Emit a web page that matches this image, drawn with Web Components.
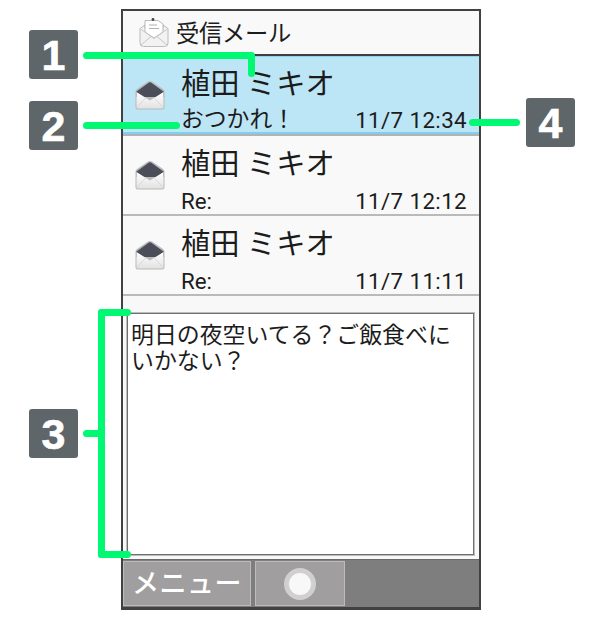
<!DOCTYPE html>
<html lang="ja"><head><meta charset="utf-8"><style>
html,body{margin:0;background:#fff}
body{font-family:Roboto,"Noto Sans CJK JP",sans-serif;color:#1c1c1c}
</style></head><body>
<annotated-stage>
  <phone-frame>
    <mail-header>受信メール</mail-header>
    <mail-row selected name="植田 ミキオ" subject="おつかれ！" time="11/7 12:34"></mail-row>
    <mail-row name="植田 ミキオ" subject="Re:" time="11/7 12:12"></mail-row>
    <mail-row name="植田 ミキオ" subject="Re:" time="11/7 11:11"></mail-row>
    <mail-body>明日の夜空いてる？ご飯食べにいかない？</mail-body>
    <soft-keys></soft-keys>
  </phone-frame>
</annotated-stage>
<script>
const def=(n,html)=>customElements.define(n,class extends HTMLElement{
  connectedCallback(){ if(this.shadowRoot) return; const r=this.attachShadow({mode:'open'}); r.innerHTML=typeof html==='function'?html(this):html; }
});
const G='#00f973';
const seg=(x,y,w,h)=>`<i style="left:${x}px;top:${y}px;width:${w}px;height:${h}px"></i>`;
const badge=(x,y,t)=>`<b style="left:${x}px;top:${y}px">${t}</b>`;
def('annotated-stage',`<style>
:host{display:block;position:relative;width:600px;height:617px;overflow:hidden}
.wrap{padding:9px 0 0 121px}
i{position:absolute;background:${G};border-radius:3.5px;display:block}
b{position:absolute;width:49px;height:49px;background:#5f666a;border-radius:3px;color:#fff;
 font:bold 43px/50px "Liberation Sans",sans-serif;text-align:center;display:block;-webkit-text-stroke:.6px #fff}
</style><div class="wrap"><slot></slot></div>
${badge(29,30,1)}${badge(29,101,2)}${badge(29,409,3)}${badge(526,98,4)}
${seg(83,52,171,7)}${seg(248,52,7,25)}
${seg(83,122,97,7)}
${seg(469,119,51,7)}
${seg(98,309,33,7)}${seg(98,309,7,249)}${seg(98,551,33,7)}${seg(83,430,20,7)}
`);
def('phone-frame',`<style>
:host{display:flex;flex-direction:column;box-sizing:border-box;width:360px;height:601px;border:solid #414141;border-width:2px 2px 3px 2px;background:#f8f8f8}
</style><slot></slot>`);
const rowIcon=`<svg width="30" height="30" viewBox="0 0 30 30">
<defs><linearGradient id="p" x1="0" y1="0" x2="0" y2="1"><stop offset="0" stop-color="#fff"/><stop offset="1" stop-color="#e2e2e2"/></linearGradient></defs>
<path d="M.5 11.500Q.5 10 2 9L13 1.500Q15 .3 17 1.500L28 9Q29.500 10 29.500 11.500V27.500Q29.500 29.500 27.500 29.500H2.500Q.5 29.500 .5 27.500Z" fill="#b9babc"/>
<path d="M1.500 11.500 14 2.500Q15 2 16 2.500L28.500 11.500V17H1.500Z" fill="#4b4e58"/>
<path d="M1.500 12 15 20.500 28.500 12V27Q28.500 28.500 27 28.500H3Q1.500 28.500 1.500 27Z" fill="url(#p)"/>
<path d="M2 27.500 11 17.500M28 27.500 19 17.500" stroke="#d2d2d2" stroke-width=".8" fill="none"/>
</svg>`;
def('mail-header',`<style>
:host{display:flex;align-items:center;box-sizing:border-box;height:45px;padding:0 0 2px 16px;gap:7px;background:#f9f9f9;border-bottom:2px solid #3f3f3f;font-size:23.300px;letter-spacing:-.3px}
svg{flex:none;margin-top:1px}
</style><svg width="30" height="30" viewBox="0 0 30 30">
<path d="M1 11.500 6 8V11H24V8L29 11.500V26Q29 29.500 25.500 29.500H4.500Q1 29.500 1 26Z" fill="#f2f2f2" stroke="#bcbcbc"/>
<path d="M6 15V3.500H19L24 7V15L15 21Z" fill="#fff" stroke="#a8a8a8" stroke-width=".8"/>
<path d="M10 8H18M10 11.500H20" stroke="#b0b0b0"/>
<circle cx="14" cy="2.500" r="1.400" fill="#444"/>
<path d="M1.500 12 15 21.500 28.500 12M2 28 12 19.500M28 28 18 19.500" fill="none" stroke="#c6c6c6"/>
</svg><slot></slot>`);
def('mail-row',e=>`<style>
:host{display:block;box-sizing:border-box;height:80px;background:#f9f9f9;border-bottom:2px solid #bababa}
:host([selected]){background:#bce5f5;border-top:1px solid #8fd3ee;border-bottom:2px solid #b3b3b3;box-shadow:inset 0 -2px #7fd0ee}
.r{display:flex;height:100%;box-sizing:border-box;padding:0 12px 0 12px}
svg{flex:none;margin:24px 16px 0 0}
:host([selected]) svg{margin-top:23px}
.t{flex:1;display:flex;flex-direction:column}
.n{font-size:29.300px;line-height:36px;margin-top:10px}
:host([selected]) .n{margin-top:9px}
.s{display:flex;justify-content:space-between;font-size:22.300px;line-height:28px;margin-top:5px}
:host([selected]) .s{margin-top:4px}
.j{font-size:22.800px}
.d{letter-spacing:.4px}
</style><div class="r">${rowIcon}<div class="t"><div class="n">${e.getAttribute('name')}</div>
<div class="s"><span class="${e.hasAttribute('selected')?'j':''}">${e.getAttribute('subject')}</span><span class="d">${e.getAttribute('time')}</span></div></div></div>`);
def('mail-body',`<style>
:host{display:block;box-sizing:border-box;flex:1;margin:16px 4px 3px 3px;background:#fff;border:2px solid #6f6f6f;padding:9px 16px 6px 3px;font-size:22.900px;line-height:26px;outline:1px solid #bdbdbd;outline-offset:-1px}
</style><slot></slot>`);
def('soft-keys',`<style>
:host{display:flex;height:48px;background:#7e7e7e;box-sizing:border-box;padding:1px 0 1px 0;gap:4px;border-top:1px solid #6a6a6a}
.k{box-sizing:border-box;background:#a09e9e;border:1px solid #bcbcbc;display:flex;align-items:center;justify-content:center}
.a{width:128px;color:#fff;font-size:27px;letter-spacing:.5px;font-weight:500;padding-bottom:4px}
.b{width:90px}
.c{width:32px;height:32px;box-sizing:border-box;border-radius:50%;background:#f8f8f8;border:5px solid #d0d0d0}
</style><div class="k a">メニュー</div><div class="k b"><div class="c"></div></div>`);
</script>
</body></html>
